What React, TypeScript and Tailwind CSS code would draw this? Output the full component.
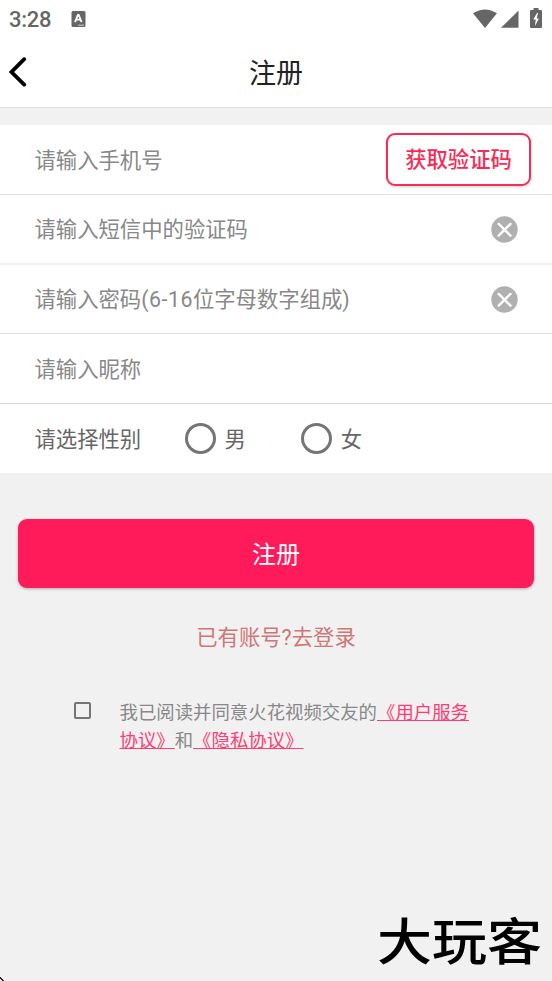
import { ReactNode } from "react"

function StatusBar() {
    return (
        <div className="flex h-[37px] items-center text-[#666666]">
            <span className="ml-[9px] w-[62px] text-[22px] leading-none font-medium tracking-[-0.3px] mt-[3px]">3:28</span>
            <svg className="h-4 w-[15px]" viewBox="0 0 15 16">
                <rect x="0.5" y="0" width="14" height="16" rx="1.5" fill="#666666" />
                <path d="M4 11.2 6.9 4h.8l2.9 7.2M5.2 8.7h4.2" fill="none" stroke="#fff" strokeWidth="1.8" />
                <path d="M7.3 14.2h6" stroke="#fff" strokeWidth="1" strokeDasharray="1.4 .6" />
            </svg>
            <div className="grow" />
            <svg className="h-5 w-[24px]" viewBox="0 0 24 20">
                <path d="M0 4.3Q12-3.5 24 4.3L12 19Z" fill="#666666" />
            </svg>
            <svg className="ml-[4px] h-5 w-[18px]" viewBox="0 0 18 20">
                <path d="M0 18.8 17.5 1.5v17.3Z" fill="#666666" />
            </svg>
            <svg className="mr-[10px] ml-[11px] h-[21px] w-[12px]" viewBox="0 0 12 21">
                <path d="M3.5 0h5v2H11a1 1 0 0 1 1 1v16a1 1 0 0 1-1 1H1a1 1 0 0 1-1-1V3a1 1 0 0 1 1-1h2.5Z" fill="#666666" />
                <path d="M7 5 3.3 11.5h2.4L5 18l3.9-7.5H6.7L8 5Z" fill="#fff" />
            </svg>
        </div>
    )
}

function ClearIcon() {
    return (
        <svg className="mr-[34px] mb-[2px] size-[27px]" viewBox="0 0 27 27">
            <circle cx="13.5" cy="13.5" r="13.2" fill="#b0b0b0" />
            <path d="m7.7 7.9 11.8 11.8m0-11.8L7.7 19.7" stroke="#fff" strokeWidth="2.4" strokeLinecap="round" />
        </svg>
    )
}

function Row({ className, children }: { className: string, children: ReactNode }) {
    return (
        <div className={`flex items-center bg-white pt-[2px] pl-[34.5px] text-[21.35px] leading-[30px] ${className}`}>
            {children}
        </div>
    )
}

function Radio({ label }: { label: string }) {
    return (
        <label className="flex items-center">
            <span className="mr-[9px] mb-[2px] size-[31px] rounded-full border-[3px] border-[#757575]" />
            {label}
        </label>
    )
}

export default function App() {
    return (
        <div className="flex h-[981px] w-[552px] flex-col overflow-hidden bg-[#f1f1f1] font-['Roboto','Noto_Sans_CJK_SC',sans-serif]">
            <div className="h-[108px] border-b border-[#dedede] bg-white">
                <StatusBar />
                <div className="grid h-[70px] grid-cols-[60px_1fr_60px] items-center">
                    <svg className="ml-[9px] h-[30px] w-[18px]" viewBox="0 0 18 30">
                        <path d="M15.2 2.2 2.5 15l12.7 12.6" fill="none" stroke="#000" strokeWidth="3.8" strokeLinecap="round" />
                    </svg>
                    <h1 className="pt-[3px] text-center text-[27px] leading-9 text-[#222222]">注册</h1>
                </div>
            </div>

            {/* form */}
            <div className="mt-[17px]">
                <Row className="h-[70px] border-b border-[#dfdfdf] text-[#888888]">
                    <span className="grow">请输入手机号</span>
                    <button className="mr-[21px] mb-[2px] h-[53px] w-[145px] rounded-[9px] border-2 border-[#fa2a55] bg-white font-medium text-[#fa2a55] shadow-[0_1px_3px_rgba(0,0,0,0.18)]">
                        获取验证码
                    </button>
                </Row>
                <Row className="h-[70px] border-b-2 border-[#f0f0f0] text-[#888888]">
                    <span className="grow">请输入短信中的验证码</span>
                    <ClearIcon />
                </Row>
                <Row className="h-[69px] border-b border-[#dfdfdf] text-[#888888]">
                    <span className="grow">请输入密码<span className="tracking-[0.5px]">(6-16</span>位字母数字组成)</span>
                    <ClearIcon />
                </Row>
                <Row className="h-[70px] border-b border-[#dadada] text-[#888888]">
                    <span>请输入昵称</span>
                </Row>
                <Row className="h-[69px] text-[#666666]">
                    <span className="w-[150px]">请选择性别</span>
                    <div className="flex gap-[55px]">
                        <Radio label="男" />
                        <Radio label="女" />
                    </div>
                </Row>
            </div>

            <button className="mx-[18px] mt-[46px] h-[69px] shrink-0 rounded-[9px] bg-[#ff1a5a] pt-[2px] text-[24px] text-white shadow-[0_1px_3px_rgba(0,0,0,0.3)]">
                注册
            </button>
            <p className="mt-[35px] text-center text-[21.35px] leading-[30px] text-[#ce7777]">已有账号?去登录</p>

            {/* agreement */}
            <div className="mt-[46px] flex">
                <span className="mt-[3px] ml-[74px] size-[17px] rounded-[2px] border-2 border-[#757575]" />
                <p className="ml-[28.5px] w-[360px] text-[18.4px] leading-[27.5px] text-[#888888]">
                    我已阅读并同意火花视频交友的<a className="text-[#ff3b74] underline decoration-1">《用户服务<br />协议》</a>和<a className="text-[#ff3b74] underline decoration-1">《隐私协议》</a>
                </p>
            </div>

            <div className="mt-auto flex items-end justify-between">
                <svg className="size-[4px]" viewBox="0 0 4 4">
                    <path d="M0 0h1v1h1v1h1v1h1v1H2V3H1V2H0Z" fill="#222" />
                </svg>
                <div className="mr-[10px] mb-[8px] origin-center scale-y-90 text-[55px] leading-[60px] font-medium text-black">大玩客</div>
            </div>
        </div>
    )
}
